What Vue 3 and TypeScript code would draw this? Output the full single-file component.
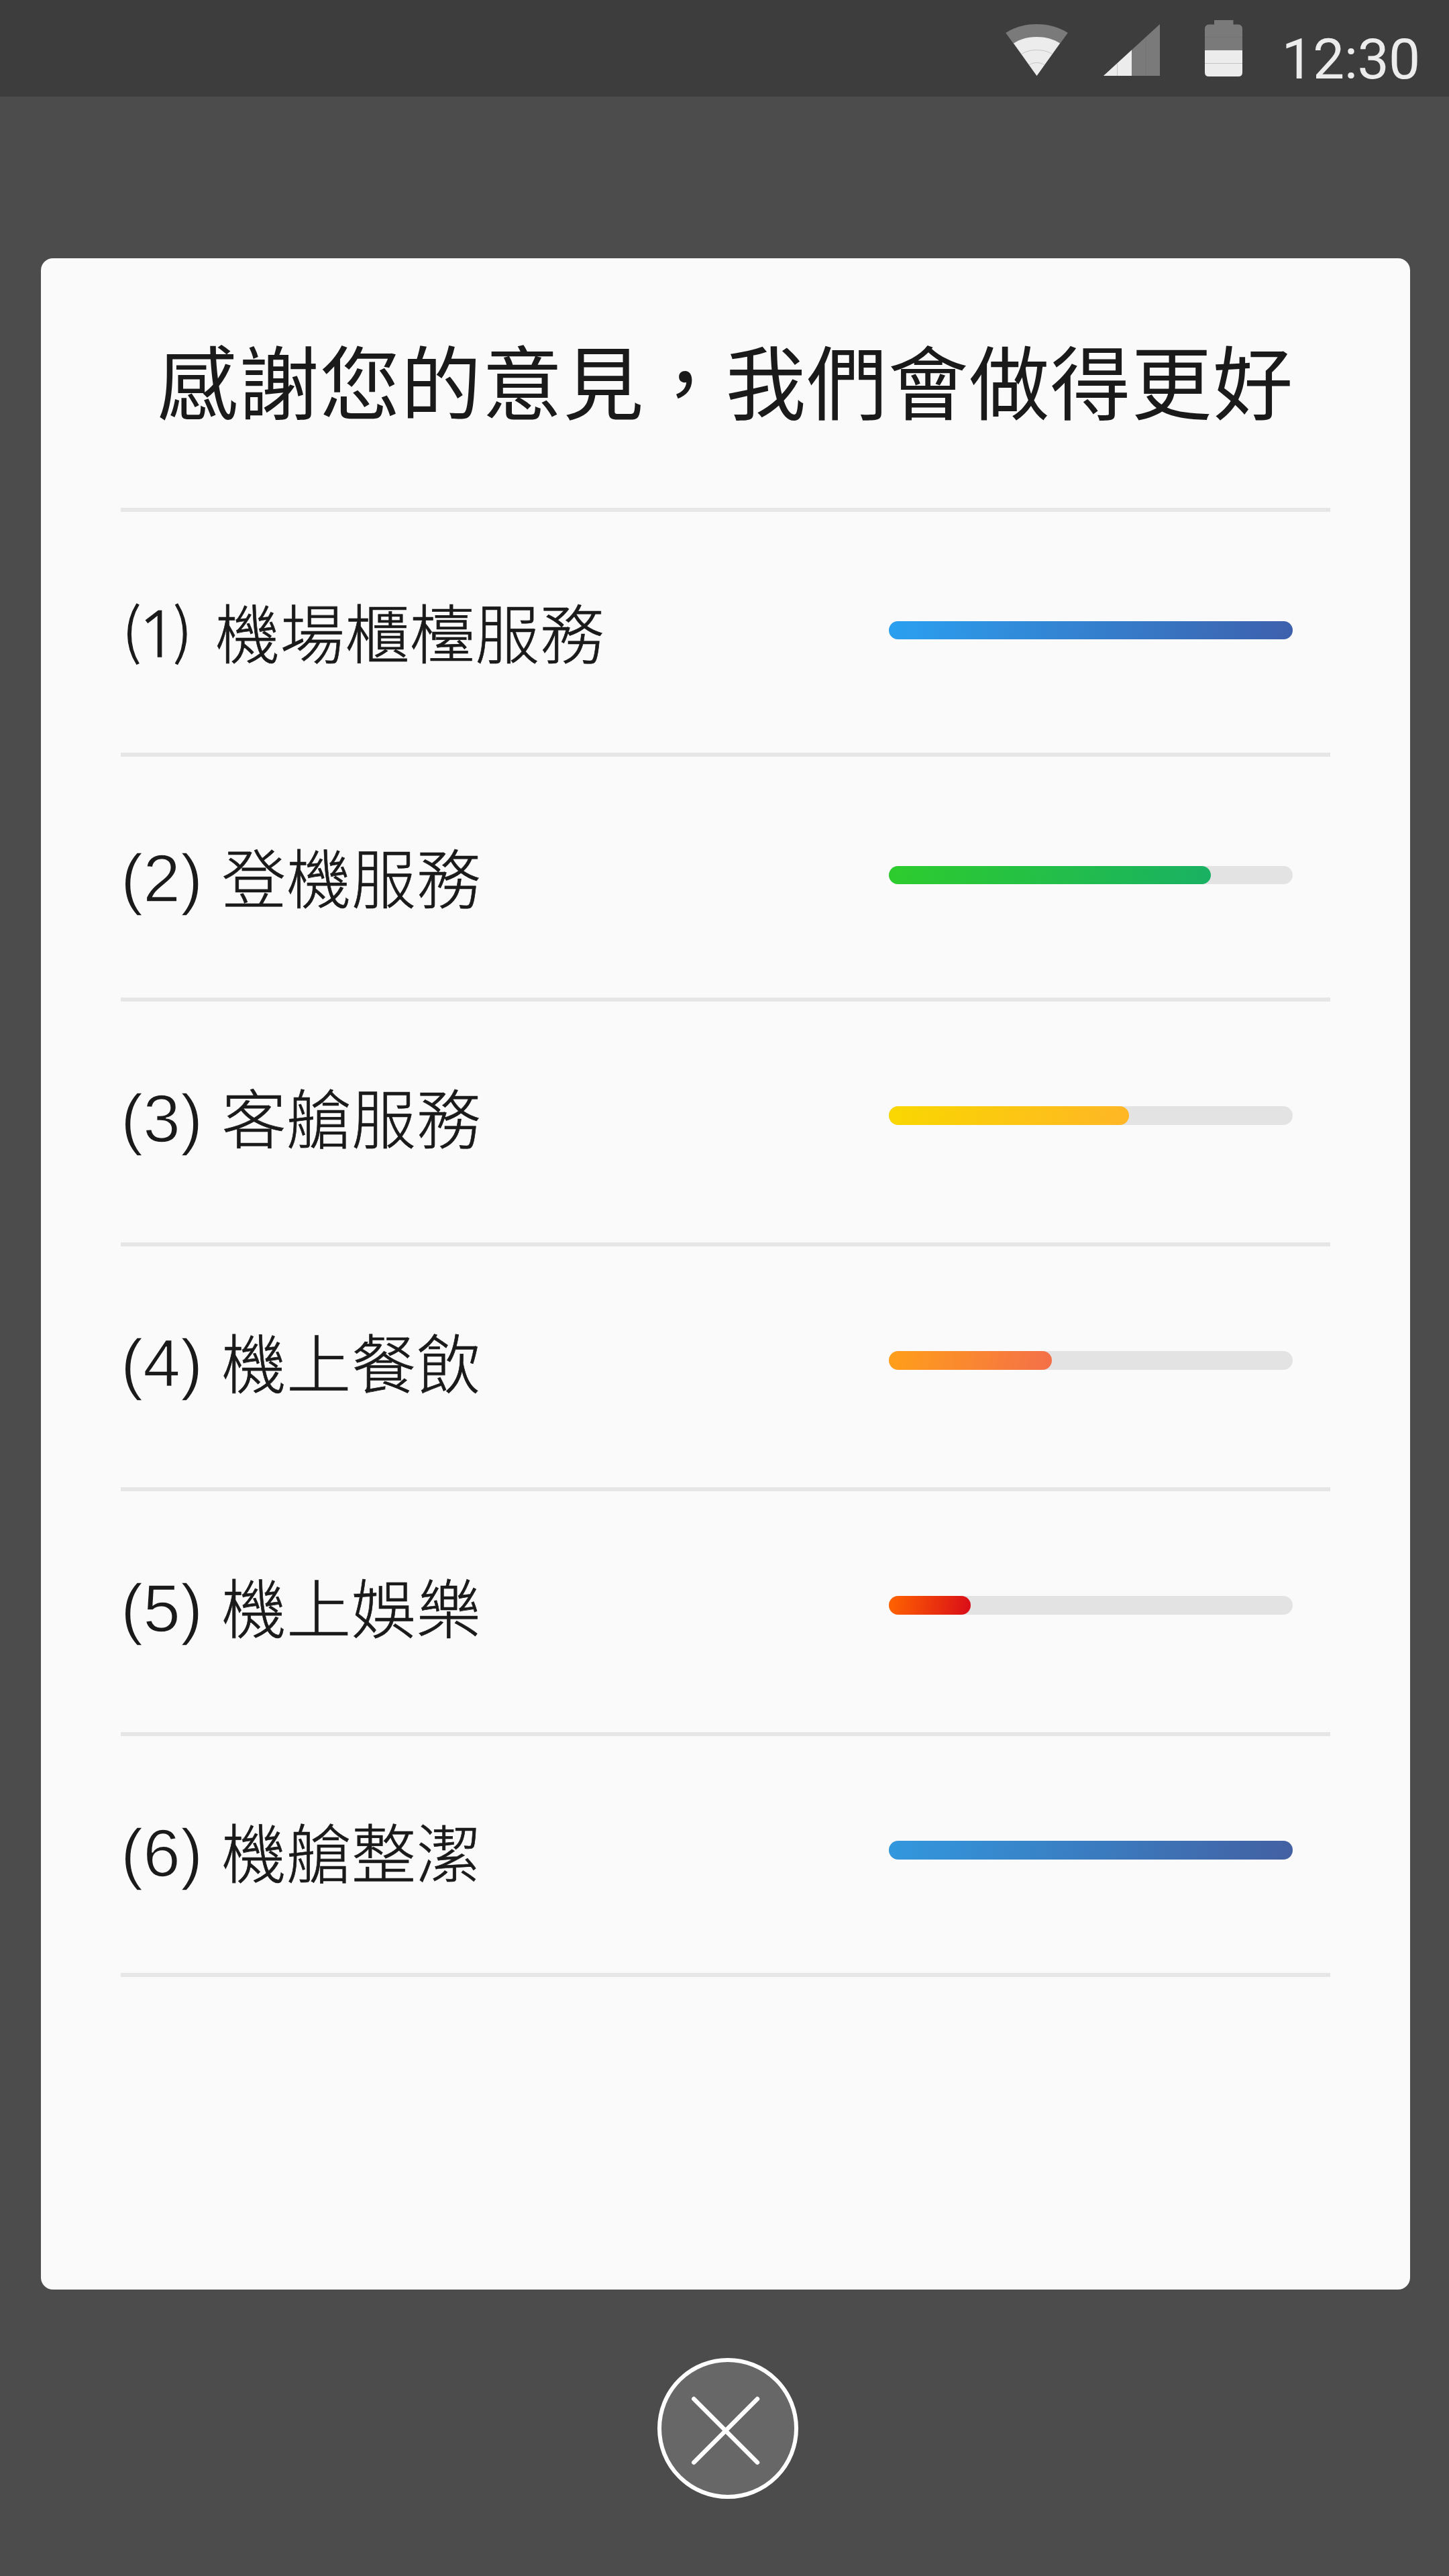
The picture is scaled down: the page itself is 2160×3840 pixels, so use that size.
<script setup lang="ts">
interface Rating {
  no: number
  name: string
  percent: number
  from: string
  to: string
}

const ratings: Rating[] = [
  { no: 1, name: '機場櫃檯服務', percent: 100, from: '#2aa0f0', to: '#3e60ac' },
  { no: 2, name: '登機服務', percent: 79.75, from: '#2dcc2d', to: '#19b163' },
  { no: 3, name: '客艙服務', percent: 59.5, from: '#f9d700', to: '#ffb626' },
  { no: 4, name: '機上餐飲', percent: 40.4, from: '#ff9f19', to: '#f46f49' },
  { no: 5, name: '機上娛樂', percent: 20.3, from: '#ff6400', to: '#d90c18' },
  { no: 6, name: '機艙整潔', percent: 100, from: '#3298de', to: '#4360a2' },
]
</script>

<template>
  <div class="screen">
    <header class="status">
      <svg class="wifi" viewBox="0 0 93 78" width="93" height="78">
        <path d="M46.500 77L0.200 13C14 4 30 0 46.500 0S79 4 92.800 13Z" fill="#7a7a7a" />
        <path d="M46.500 77L12 28.500C22 22 34 19 46.500 19S71 22 81 28.500Z" fill="#ececec" />
        <path d="M23.700 44.500C30 40.500 38 38.500 46.500 38.500S63 40.500 69.300 44.500M35 61C38.500 58.500 42 57.500 46.500 57.500S54.500 58.500 58 61" fill="none" stroke="#c4c4c4" />
      </svg>
      <svg class="signal" viewBox="0 0 84 77" width="84" height="77">
        <path d="M84 0V77H0Z" fill="#7a7a7a" />
        <path d="M42 38.500V77H0Z" fill="#ececec" />
        <path d="M20.500 58.500V77" stroke="#c4c4c4" />
        <path d="M63 19.500V77" stroke="#747474" />
      </svg>
      <svg class="battery" viewBox="0 0 56 84" width="56" height="84">
        <path d="M14 0H42.500V6.500H50Q56 7 56 13V45H0V13Q0 7 6 6.500H14Z" fill="#7a7a7a" />
        <path d="M0 45H56V78Q56 84 50 84H6Q0 84 0 78Z" fill="#ececec" />
        <path d="M0 64.500H56" stroke="#c4c4c4" />
        <path d="M0 25.500H56" stroke="#747474" />
      </svg>
      <span class="clock">12:30</span>
    </header>

    <main class="card">
      <h1 class="title">感謝您的意見，我們會做得更好</h1>
      <ul class="list">
        <li v-for="r in ratings" :key="r.no" class="row">
          <div class="label"><span class="no"><span class="paren">(</span><span class="digit">{{ r.no }}</span><span class="paren">)</span></span><span class="name">{{ r.name }}</span></div>
          <div class="track">
            <div
              class="fill"
              :style="{ width: r.percent + '%', backgroundImage: `linear-gradient(100deg, ${r.from}, ${r.to})` }"
            ></div>
          </div>
        </li>
      </ul>
    </main>

    <button class="close" type="button" aria-label="關閉">
      <svg viewBox="0 0 210 210" width="210" height="210">
        <circle cx="105" cy="105" r="102" fill="#676767" stroke="#fff" stroke-width="6" />
        <path d="M54.300 61L149 155.700M149 61L54.300 155.700" stroke="#fff" stroke-width="6.500" stroke-linecap="round" />
      </svg>
    </button>
  </div>
</template>

<style>
body {
  margin: 0;
  background: #4c4c4c;
}
</style>

<style scoped>
.screen {
  box-sizing: border-box;
  display: flex;
  flex-direction: column;
  width: 2160px;
  height: 3840px;
  overflow: hidden;
  background: #4c4c4c;
  font-family: "Noto Sans CJK TC", sans-serif;
  color: #1a1a1a;
}

.status {
  box-sizing: border-box;
  display: flex;
  flex: none;
  align-items: flex-start;
  height: 144px;
  padding-left: 1499px;
  background: #3d3d3d;
}

.status svg {
  display: block;
  flex: none;
}

.wifi {
  margin-top: 36px;
}

.signal {
  margin: 36px 0 0 53px;
}

.battery {
  margin: 30px 0 0 66.500px;
}

.clock {
  margin: 39px 0 0 59px;
  color: #ececec;
  font: 400 84px/100px Roboto, sans-serif;
  letter-spacing: -0.600px;
  white-space: nowrap;
}

.card {
  box-sizing: border-box;
  flex: none;
  width: 2041px;
  height: 3028px;
  margin: 241.300px 0 0 60.500px;
  padding: 0 118.500px 0 119.500px;
  border-radius: 18px;
  background: #fafafa;
}

.title {
  box-sizing: border-box;
  height: 378px;
  margin: 0;
  padding-top: 93px;
  border-bottom: 6px solid #e6e6e6;
  font-size: 120px;
  font-weight: 400;
  letter-spacing: 1px;
  line-height: 174px;
  text-align: center;
  white-space: nowrap;
}

.list {
  margin: 0;
  padding: 0;
  list-style: none;
}

.row {
  box-sizing: border-box;
  display: flex;
  align-items: flex-start;
  justify-content: space-between;
  height: 365px;
  padding: 156px 56.500px 0 0;
  border-bottom: 6px solid #e6e6e6;
}

.row:nth-child(-n + 2) {
  padding-top: 162.500px;
}

.row:last-child {
  height: 359px;
}

.label {
  height: 28px;
  font-size: 96px;
  font-weight: 300;
  letter-spacing: 0.800px;
  line-height: 28px;
  white-space: nowrap;
}

.name {
  -webkit-text-stroke: 0.700px #1a1a1a;
}

/* The card-coloured outline slims the numerals to a light weight. */
.no {
  display: inline-block;
  width: 150.500px;
  font-family: "Liberation Sans", Arial, sans-serif;
  font-size: 100px;
  letter-spacing: 0;
  line-height: 0;
  vertical-align: 2px;
  -webkit-text-stroke: 1.600px #fafafa;
}

.row:first-child .no {
  width: 141px;
  font-family: "Noto Sans", sans-serif;
  font-size: 96px;
  -webkit-text-stroke: 1.300px #1a1a1a;
}

.row:first-child .paren {
  margin-left: 2px;
  font-family: "Noto Sans CJK TC", sans-serif;
  font-size: 90px;
  vertical-align: 6px;
}

.row:first-child .digit {
  margin: 0 -7px 0 -2px;
}

.track {
  width: 602px;
  height: 27.500px;
  border-radius: 14px;
  background: #e3e3e3;
}

.fill {
  height: 100%;
  border-radius: inherit;
}

.close {
  display: block;
  width: 210px;
  height: 210px;
  margin: 101.500px 0 0 980px;
  padding: 0;
  border: 0;
  background: none;
}

.close svg {
  display: block;
}
</style>
